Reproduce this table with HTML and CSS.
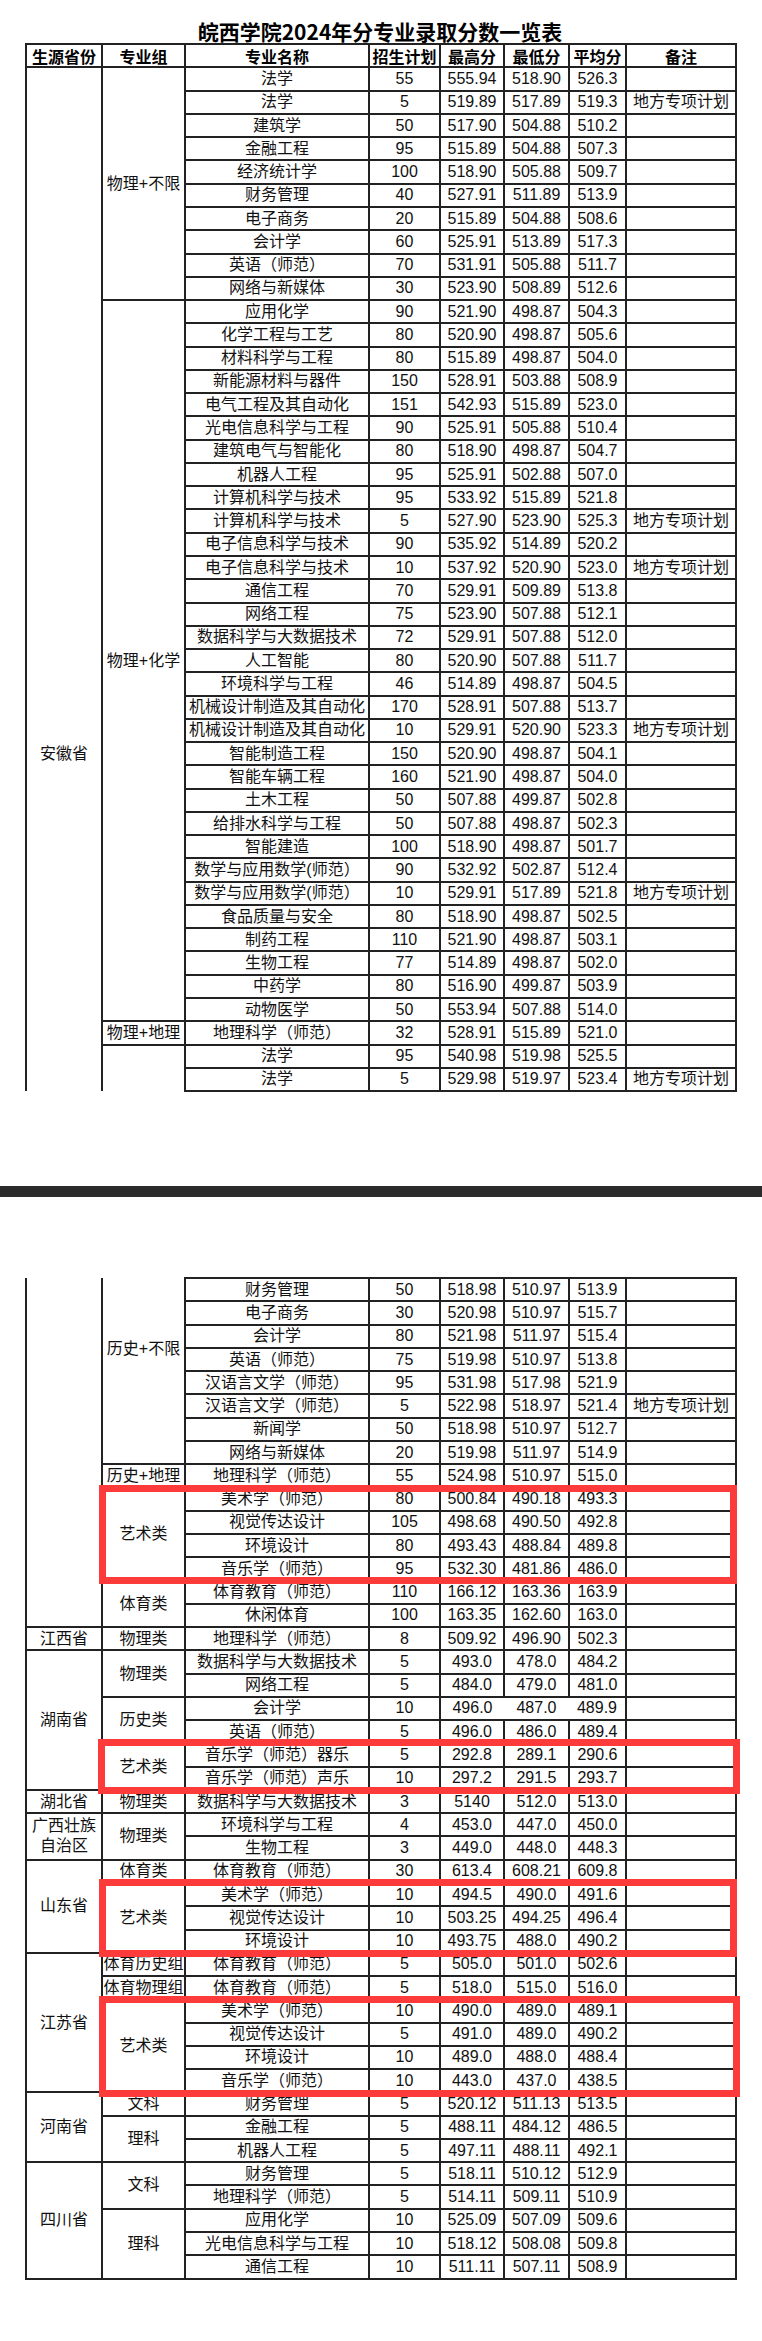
FILE: index.html
```html
<!DOCTYPE html>
<html lang="zh-CN">
<head>
<meta charset="utf-8">
<title>皖西学院2024年分专业录取分数一览表</title>
<link rel="stylesheet" href="styles.css">
</head>
<body>
<div class="page">
  <div class="title">皖西学院2024年分专业录取分数一览表</div>
  <table class="sheet">
    <colgroup>
      <col class="w-prov"><col class="w-group"><col class="w-name"><col class="w-plan">
      <col class="w-max"><col class="w-min"><col class="w-avg"><col class="w-note">
    </colgroup>
    <tr class="head"><th>生源省份</th><th>专业组</th><th>专业名称</th><th>招生计划</th><th>最高分</th><th>最低分</th><th>平均分</th><th>备注</th></tr>
    <tr><td rowspan="44" class="open-bottom drop-ah">安徽省</td><td rowspan="10">物理+不限</td><td>法学</td><td>55</td><td>555.94</td><td>518.90</td><td>526.3</td><td></td></tr>
    <tr><td>法学</td><td>5</td><td>519.89</td><td>517.89</td><td>519.3</td><td>地方专项计划</td></tr>
    <tr><td>建筑学</td><td>50</td><td>517.90</td><td>504.88</td><td>510.2</td><td></td></tr>
    <tr><td>金融工程</td><td>95</td><td>515.89</td><td>504.88</td><td>507.3</td><td></td></tr>
    <tr><td>经济统计学</td><td>100</td><td>518.90</td><td>505.88</td><td>509.7</td><td></td></tr>
    <tr><td>财务管理</td><td>40</td><td>527.91</td><td>511.89</td><td>513.9</td><td></td></tr>
    <tr><td>电子商务</td><td>20</td><td>515.89</td><td>504.88</td><td>508.6</td><td></td></tr>
    <tr><td>会计学</td><td>60</td><td>525.91</td><td>513.89</td><td>517.3</td><td></td></tr>
    <tr><td>英语（师范）</td><td>70</td><td>531.91</td><td>505.88</td><td>511.7</td><td></td></tr>
    <tr><td>网络与新媒体</td><td>30</td><td>523.90</td><td>508.89</td><td>512.6</td><td></td></tr>
    <tr><td rowspan="31">物理+化学</td><td>应用化学</td><td>90</td><td>521.90</td><td>498.87</td><td>504.3</td><td></td></tr>
    <tr><td>化学工程与工艺</td><td>80</td><td>520.90</td><td>498.87</td><td>505.6</td><td></td></tr>
    <tr><td>材料科学与工程</td><td>80</td><td>515.89</td><td>498.87</td><td>504.0</td><td></td></tr>
    <tr><td>新能源材料与器件</td><td>150</td><td>528.91</td><td>503.88</td><td>508.9</td><td></td></tr>
    <tr><td>电气工程及其自动化</td><td>151</td><td>542.93</td><td>515.89</td><td>523.0</td><td></td></tr>
    <tr><td>光电信息科学与工程</td><td>90</td><td>525.91</td><td>505.88</td><td>510.4</td><td></td></tr>
    <tr><td>建筑电气与智能化</td><td>80</td><td>518.90</td><td>498.87</td><td>504.7</td><td></td></tr>
    <tr><td>机器人工程</td><td>95</td><td>525.91</td><td>502.88</td><td>507.0</td><td></td></tr>
    <tr><td>计算机科学与技术</td><td>95</td><td>533.92</td><td>515.89</td><td>521.8</td><td></td></tr>
    <tr><td>计算机科学与技术</td><td>5</td><td>527.90</td><td>523.90</td><td>525.3</td><td>地方专项计划</td></tr>
    <tr><td>电子信息科学与技术</td><td>90</td><td>535.92</td><td>514.89</td><td>520.2</td><td></td></tr>
    <tr><td>电子信息科学与技术</td><td>10</td><td>537.92</td><td>520.90</td><td>523.0</td><td>地方专项计划</td></tr>
    <tr><td>通信工程</td><td>70</td><td>529.91</td><td>509.89</td><td>513.8</td><td></td></tr>
    <tr><td>网络工程</td><td>75</td><td>523.90</td><td>507.88</td><td>512.1</td><td></td></tr>
    <tr><td>数据科学与大数据技术</td><td>72</td><td>529.91</td><td>507.88</td><td>512.0</td><td></td></tr>
    <tr><td>人工智能</td><td>80</td><td>520.90</td><td>507.88</td><td>511.7</td><td></td></tr>
    <tr><td>环境科学与工程</td><td>46</td><td>514.89</td><td>498.87</td><td>504.5</td><td></td></tr>
    <tr><td>机械设计制造及其自动化</td><td>170</td><td>528.91</td><td>507.88</td><td>513.7</td><td></td></tr>
    <tr><td>机械设计制造及其自动化</td><td>10</td><td>529.91</td><td>520.90</td><td>523.3</td><td>地方专项计划</td></tr>
    <tr><td>智能制造工程</td><td>150</td><td>520.90</td><td>498.87</td><td>504.1</td><td></td></tr>
    <tr><td>智能车辆工程</td><td>160</td><td>521.90</td><td>498.87</td><td>504.0</td><td></td></tr>
    <tr><td>土木工程</td><td>50</td><td>507.88</td><td>499.87</td><td>502.8</td><td></td></tr>
    <tr><td>给排水科学与工程</td><td>50</td><td>507.88</td><td>498.87</td><td>502.3</td><td></td></tr>
    <tr><td>智能建造</td><td>100</td><td>518.90</td><td>498.87</td><td>501.7</td><td></td></tr>
    <tr><td>数学与应用数学(师范）</td><td>90</td><td>532.92</td><td>502.87</td><td>512.4</td><td></td></tr>
    <tr><td>数学与应用数学(师范）</td><td>10</td><td>529.91</td><td>517.89</td><td>521.8</td><td>地方专项计划</td></tr>
    <tr><td>食品质量与安全</td><td>80</td><td>518.90</td><td>498.87</td><td>502.5</td><td></td></tr>
    <tr><td>制药工程</td><td>110</td><td>521.90</td><td>498.87</td><td>503.1</td><td></td></tr>
    <tr><td>生物工程</td><td>77</td><td>514.89</td><td>498.87</td><td>502.0</td><td></td></tr>
    <tr><td>中药学</td><td>80</td><td>516.90</td><td>499.87</td><td>503.9</td><td></td></tr>
    <tr><td>动物医学</td><td>50</td><td>553.94</td><td>507.88</td><td>514.0</td><td></td></tr>
    <tr><td>物理+地理</td><td>地理科学（师范）</td><td>32</td><td>528.91</td><td>515.89</td><td>521.0</td><td></td></tr>
    <tr><td rowspan="2" class="open-bottom"></td><td>法学</td><td>95</td><td>540.98</td><td>519.98</td><td>525.5</td><td></td></tr>
    <tr><td>法学</td><td>5</td><td>529.98</td><td>519.97</td><td>523.4</td><td>地方专项计划</td></tr>
  </table>

  <div class="page-break"></div>

  <div class="part2">
    <table class="sheet">
      <colgroup>
        <col class="w-prov"><col class="w-group"><col class="w-name"><col class="w-plan">
        <col class="w-max"><col class="w-min"><col class="w-avg"><col class="w-note">
      </colgroup>
      <tr><td rowspan="15" class="open-top"></td><td rowspan="8" class="open-top lift-hist">历史+不限</td><td>财务管理</td><td>50</td><td>518.98</td><td>510.97</td><td>513.9</td><td></td></tr>
      <tr><td>电子商务</td><td>30</td><td>520.98</td><td>510.97</td><td>515.7</td><td></td></tr>
      <tr><td>会计学</td><td>80</td><td>521.98</td><td>511.97</td><td>515.4</td><td></td></tr>
      <tr><td>英语（师范）</td><td>75</td><td>519.98</td><td>510.97</td><td>513.8</td><td></td></tr>
      <tr><td>汉语言文学（师范）</td><td>95</td><td>531.98</td><td>517.98</td><td>521.9</td><td></td></tr>
      <tr><td>汉语言文学（师范）</td><td>5</td><td>522.98</td><td>518.97</td><td>521.4</td><td>地方专项计划</td></tr>
      <tr><td>新闻学</td><td>50</td><td>518.98</td><td>510.97</td><td>512.7</td><td></td></tr>
      <tr><td>网络与新媒体</td><td>20</td><td>519.98</td><td>511.97</td><td>514.9</td><td></td></tr>
      <tr><td>历史+地理</td><td>地理科学（师范）</td><td>55</td><td>524.98</td><td>510.97</td><td>515.0</td><td></td></tr>
      <tr><td rowspan="4">艺术类</td><td>美术学（师范）</td><td>80</td><td>500.84</td><td>490.18</td><td>493.3</td><td></td></tr>
      <tr><td>视觉传达设计</td><td>105</td><td>498.68</td><td>490.50</td><td>492.8</td><td></td></tr>
      <tr><td>环境设计</td><td>80</td><td>493.43</td><td>488.84</td><td>489.8</td><td></td></tr>
      <tr><td>音乐学（师范）</td><td>95</td><td>532.30</td><td>481.86</td><td>486.0</td><td></td></tr>
      <tr><td rowspan="2">体育类</td><td>体育教育（师范）</td><td>110</td><td>166.12</td><td>163.36</td><td>163.9</td><td></td></tr>
      <tr><td>休闲体育</td><td>100</td><td>163.35</td><td>162.60</td><td>163.0</td><td></td></tr>
      <tr><td>江西省</td><td>物理类</td><td>地理科学（师范）</td><td>8</td><td>509.92</td><td>496.90</td><td>502.3</td><td></td></tr>
      <tr><td rowspan="6">湖南省</td><td rowspan="2">物理类</td><td>数据科学与大数据技术</td><td>5</td><td>493.0</td><td>478.0</td><td>484.2</td><td></td></tr>
      <tr><td>网络工程</td><td>5</td><td>484.0</td><td>479.0</td><td>481.0</td><td></td></tr>
      <tr><td rowspan="2">历史类</td><td>会计学</td><td>10</td><td class="no-right">496.0</td><td class="no-left no-right">487.0</td><td class="no-left">489.9</td><td></td></tr>
      <tr><td>英语（师范）</td><td>5</td><td>496.0</td><td>486.0</td><td>489.4</td><td></td></tr>
      <tr><td rowspan="2">艺术类</td><td>音乐学（师范）器乐</td><td>5</td><td>292.8</td><td>289.1</td><td>290.6</td><td></td></tr>
      <tr><td>音乐学（师范）声乐</td><td>10</td><td>297.2</td><td>291.5</td><td>293.7</td><td></td></tr>
      <tr><td>湖北省</td><td>物理类</td><td>数据科学与大数据技术</td><td>3</td><td>5140</td><td>512.0</td><td>513.0</td><td></td></tr>
      <tr><td rowspan="2" class="two-line">广西壮族<br>自治区</td><td rowspan="2">物理类</td><td>环境科学与工程</td><td>4</td><td>453.0</td><td>447.0</td><td>450.0</td><td></td></tr>
      <tr><td>生物工程</td><td>3</td><td>449.0</td><td>448.0</td><td>448.3</td><td></td></tr>
      <tr><td rowspan="4">山东省</td><td>体育类</td><td>体育教育（师范）</td><td>30</td><td>613.4</td><td>608.21</td><td>609.8</td><td></td></tr>
      <tr><td rowspan="3">艺术类</td><td>美术学（师范）</td><td>10</td><td>494.5</td><td>490.0</td><td>491.6</td><td></td></tr>
      <tr><td>视觉传达设计</td><td>10</td><td>503.25</td><td>494.25</td><td>496.4</td><td></td></tr>
      <tr><td>环境设计</td><td>10</td><td>493.75</td><td>488.0</td><td>490.2</td><td></td></tr>
      <tr><td rowspan="6">江苏省</td><td>体育历史组</td><td>体育教育（师范）</td><td>5</td><td>505.0</td><td>501.0</td><td>502.6</td><td></td></tr>
      <tr><td>体育物理组</td><td>体育教育（师范）</td><td>5</td><td>518.0</td><td>515.0</td><td>516.0</td><td></td></tr>
      <tr><td rowspan="4">艺术类</td><td>美术学（师范）</td><td>10</td><td>490.0</td><td>489.0</td><td>489.1</td><td></td></tr>
      <tr><td>视觉传达设计</td><td>5</td><td>491.0</td><td>489.0</td><td>490.2</td><td></td></tr>
      <tr><td>环境设计</td><td>10</td><td>489.0</td><td>488.0</td><td>488.4</td><td></td></tr>
      <tr><td>音乐学（师范）</td><td>10</td><td>443.0</td><td>437.0</td><td>438.5</td><td></td></tr>
      <tr><td rowspan="3">河南省</td><td>文科</td><td>财务管理</td><td>5</td><td>520.12</td><td>511.13</td><td>513.5</td><td></td></tr>
      <tr><td rowspan="2">理科</td><td>金融工程</td><td>5</td><td>488.11</td><td>484.12</td><td>486.5</td><td></td></tr>
      <tr><td>机器人工程</td><td>5</td><td>497.11</td><td>488.11</td><td>492.1</td><td></td></tr>
      <tr><td rowspan="5">四川省</td><td rowspan="2">文科</td><td>财务管理</td><td>5</td><td>518.11</td><td>510.12</td><td>512.9</td><td></td></tr>
      <tr><td>地理科学（师范）</td><td>5</td><td>514.11</td><td>509.11</td><td>510.9</td><td></td></tr>
      <tr><td rowspan="3">理科</td><td>应用化学</td><td>10</td><td>525.09</td><td>507.09</td><td>509.6</td><td></td></tr>
      <tr><td>光电信息科学与工程</td><td>10</td><td>518.12</td><td>508.08</td><td>509.8</td><td></td></tr>
      <tr><td>通信工程</td><td>10</td><td>511.11</td><td>507.11</td><td>508.9</td><td></td></tr>
    </table>
    <div class="mark mark-1"></div>
    <div class="mark mark-2"></div>
    <div class="mark mark-3"></div>
    <div class="mark mark-4"></div>
  </div>
</div>
</body>
</html>
```

FILE: styles.css
```css
html, body {
  margin: 0;
  padding: 0;
  background: #fff;
}

body {
  font-family: "Liberation Sans", "Noto Sans CJK SC", sans-serif;
  color: #111;
}

.page {
  width: 762px;
}

.title {
  margin-left: 25px;
  width: 710px;
  padding-top: 20px;
  height: 23px;
  line-height: 23px;
  font-family: "Noto Sans CJK SC", sans-serif;
  font-size: 21px;
  font-weight: bold;
  text-align: center;
  color: #000;
}

.sheet {
  margin-left: 25px;
  width: 710px;
  border-collapse: collapse;
  table-layout: fixed;
  font-size: 16px;
}

.sheet tr {
  height: 23.27px;
}

.sheet .head {
  height: 23.4px;
}

.sheet td,
.sheet th {
  border: 2px solid #222;
  padding: 0;
  text-align: center;
  vertical-align: middle;
  white-space: nowrap;
  line-height: 20px;
  overflow: visible;
}

.sheet th {
  font-family: "Noto Sans CJK SC", sans-serif;
  font-weight: bold;
  color: #000;
}

.w-prov { width: 76px; }
.w-group { width: 83px; }
.w-name { width: 184px; }
.w-plan { width: 71px; }
.w-max { width: 64px; }
.w-min { width: 65px; }
.w-avg { width: 57px; }
.w-note { width: 110px; }

.sheet td.open-bottom { border-bottom: none; }
.sheet td.open-top { border-top: none; }
.sheet td.no-right { border-right: none; }
.sheet td.no-left { border-left: none; }

.sheet td.drop-ah { padding-top: 349px; }
.sheet td.lift-hist { padding-bottom: 44px; }

.sheet td.two-line { line-height: 20px; }

.page-break {
  margin-top: 94px;
  margin-bottom: 80px;
  height: 11px;
  background: #2b2b2b;
}

.part2 {
  position: relative;
}

.mark {
  position: absolute;
  box-sizing: border-box;
  border: 7px solid #fd3b3b;
}

.mark-1 { left: 99px; top: 208px; width: 638px; height: 99px; }
.mark-2 { left: 98px; top: 462px; width: 642px; height: 55px; }
.mark-3 { left: 99px; top: 602px; width: 638px; height: 78px; }
.mark-4 { left: 99px; top: 719px; width: 641px; height: 101px; }
```
